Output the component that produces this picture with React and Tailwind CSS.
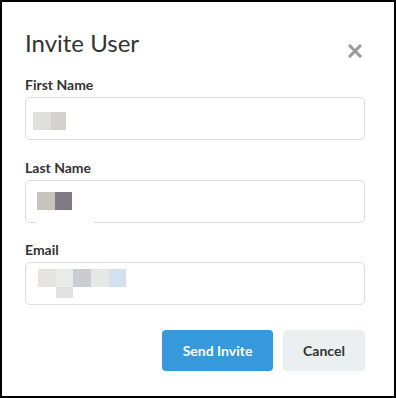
import React from 'react';

const FIELDS = [
  {
    label: 'First Name',
    pad: 'pl-[7px] pt-[14px]',
    rows: [[['#dfe0dd', 18], ['#d6d1cc', 15]]],
  },
  {
    label: 'Last Name',
    pad: 'pl-[11px] pt-[11px]',
    rows: [[['#c8c4bd', 18], ['#807a84', 17]]],
    gap: true,
  },
  {
    label: 'Email',
    pad: 'pl-[12px] pt-[6px]',
    rows: [
      [['#e6e4e1', 18], ['#e9ebea', 17], ['#cdcbd2', 18], ['#e6e8e6', 18], ['#d2e0f0', 17]],
      [['transparent', 18], ['#e1e1e1', 17]],
    ],
  },
];

function Field({ field, className }) {
  return (
    <div className={className}>
      <label className="block text-[14px] leading-5 font-bold text-[#333]">{field.label}</label>
      <div className={`relative mt-[2px] h-[43px] rounded-[5px] border border-[#dcdcdc] ${field.pad}`}>
        {field.rows.map((row, i) => (
          <div key={i} className="flex">
            {row.map(([color, w], j) => (
              <span key={j} className={i === 0 ? 'h-[18px]' : 'h-[11px]'} style={{ backgroundColor: color, width: w }} />
            ))}
          </div>
        ))}
        {field.gap && <span className="absolute -bottom-px left-[10px] h-[2px] w-[58px] bg-white" />}
      </div>
    </div>
  );
}

export default function App() {
  return (
    <div className="w-[396px] h-[398px] border-2 border-black bg-white pl-[23px] pr-[29px] pt-[27px] font-['Lato','Noto_Sans',sans-serif]">
      <div className="flex items-start justify-between">
        <h1 className="text-[24px] leading-7 font-normal text-[#333]">Invite User</h1>
        <button className="mt-[15px] mr-[3px] text-[#999]">
          <svg width="14" height="14" viewBox="0 0 14 14">
            <path d="M2 2L12 12M12 2L2 12" stroke="currentColor" strokeWidth="3" strokeLinecap="square" />
          </svg>
        </button>
      </div>
      <Field field={FIELDS[0]} className="mt-[17px]" />
      <Field field={FIELDS[1]} className="mt-[18px]" />
      <Field field={FIELDS[2]} className="mt-[17px]" />
      <div className="mt-[25px] flex justify-end gap-[10px]">
        <button className="h-[41px] w-[111px] rounded-[4px] bg-[#3699dc] text-[14px] font-bold text-white">Send Invite</button>
        <button className="h-[41px] w-[82px] rounded-[4px] bg-[#ebeff0] text-[14px] font-bold text-[#333]">Cancel</button>
      </div>
    </div>
  );
}
